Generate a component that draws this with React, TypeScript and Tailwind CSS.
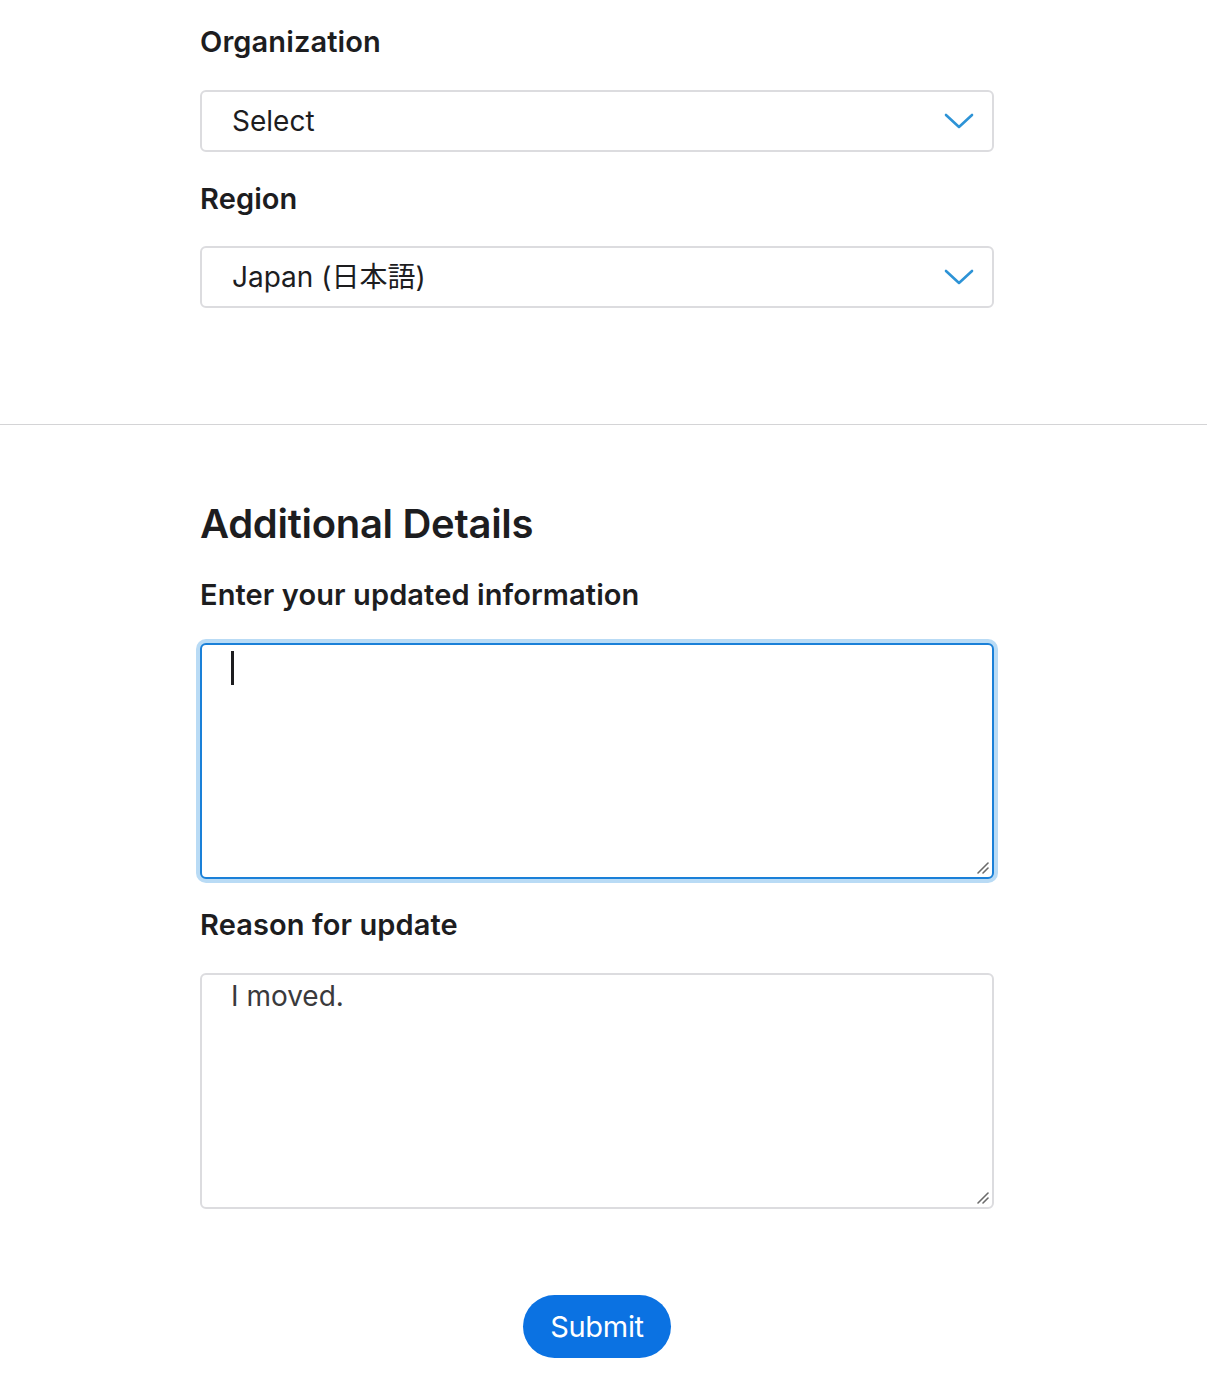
import React from 'react'

const font = { fontFamily: 'Inter, "Noto Sans CJK JP", sans-serif' }

const Chevron = () => (
  <svg width="30" height="16" viewBox="0 0 30 16" fill="none" className="shrink-0">
    <path d="M2 2 L15 14 L28 2" stroke="#2d93d6" strokeWidth="2.6" strokeLinecap="round" strokeLinejoin="round" />
  </svg>
)

// iOS-style resize grip drawn over the textarea corner
const Grip = () => (
  <svg width="14" height="14" viewBox="0 0 14 14" fill="none" className="absolute right-[4px] bottom-[4px] pointer-events-none">
    <path d="M2 12 L12 2" stroke="#6b6b6b" strokeWidth="1.6" strokeLinecap="round" />
    <path d="M7 12 L12 7" stroke="#6b6b6b" strokeWidth="1.6" strokeLinecap="round" />
  </svg>
)

const FieldLabel = ({ children }: { children: React.ReactNode }) => (
  <div className="text-[29px] leading-[36px] font-semibold text-[#1d1d1f] tracking-[0.1px]">{children}</div>
)

const SelectBox = ({ value }: { value: string }) => (
  <div className="h-[62px] rounded-[6px] border-2 border-[#dcdcdf] bg-white flex items-center justify-between pl-[30px] pr-[18px]">
    <span className="text-[28px] text-[#1d1d1f]">{value}</span>
    <Chevron />
  </div>
)

export default function App() {
  return (
    <div className="w-[1207px] min-h-[1400px] bg-white" style={font}>
      <div className="pl-[200px] w-[994px] pt-[24px] pb-[116px] flex flex-col">
        <FieldLabel>Organization</FieldLabel>
        <div className="mt-[30px]">
          <SelectBox value="Select" />
        </div>
        <div className="mt-[29px]">
          <FieldLabel>Region</FieldLabel>
        </div>
        <div className="mt-[29px]">
          <SelectBox value="Japan (日本語)" />
        </div>
      </div>

      <div className="h-px bg-[#d4d4d6]" />

      <div className="pl-[200px] w-[994px] pt-[75px] flex flex-col">
        <h2 className="text-[40px] leading-[48px] font-semibold text-[#1d1d1f] tracking-[-0.3px]">Additional Details</h2>
        <div className="mt-[29px]">
          <FieldLabel>Enter your updated information</FieldLabel>
        </div>
        <div className="mt-[30px] relative">
          <textarea
            className="block w-full h-[236px] resize-none rounded-[6px] border-2 border-[#1a80d8] ring-4 ring-[#b9dbf5] bg-white outline-none text-[28px] text-[#1d1d1f] pl-[30px] pt-[4px]"
            defaultValue=""
          />
          <span className="absolute left-[31px] top-[8px] w-[3px] h-[34px] bg-[#1d1d1f]" />
          <Grip />
        </div>
        <div className="mt-[28px]">
          <FieldLabel>Reason for update</FieldLabel>
        </div>
        <div className="mt-[30px] relative">
          <textarea
            className="block w-full h-[236px] resize-none rounded-[6px] border-2 border-[#dcdcdf] bg-white outline-none text-[28px] leading-[36px] text-[#3a3a3c] pl-[29px] pt-[3px]"
            defaultValue="I moved."
          />
          <Grip />
        </div>
        <div className="mt-[86px] flex justify-center">
          <button
            type="button"
            className="w-[148px] h-[63px] rounded-full bg-[#0b72e2] text-white text-[29px] tracking-[-0.3px]"
          >
            Submit
          </button>
        </div>
      </div>
    </div>
  )
}
